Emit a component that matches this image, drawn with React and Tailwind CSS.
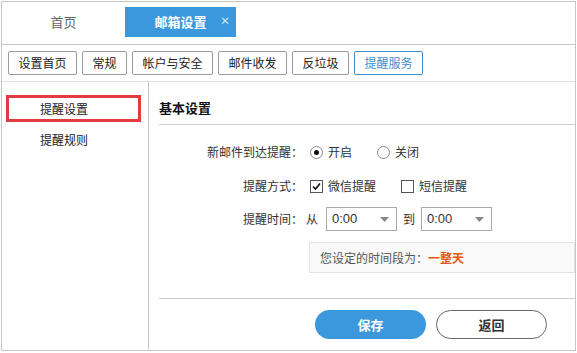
import { useState } from 'react';

const FONT = { fontFamily: '"Noto Sans CJK SC", "Liberation Sans", sans-serif' };

const TOP_BUTTONS = [
  { label: '设置首页', w: 'w-[69px]' },
  { label: '常规', w: 'w-[45px]' },
  { label: '帐户与安全', w: 'w-[81px]' },
  { label: '邮件收发', w: 'w-[69px]' },
  { label: '反垃圾', w: 'w-[57px]' },
  { label: '提醒服务', w: 'w-[69px]', active: true },
];

function Radio({ checked, label, onClick }) {
  return (
    <label className="flex items-center cursor-pointer" onClick={onClick}>
      <span className="w-[13px] h-[13px] rounded-full border border-[#8a8a8a] bg-white flex items-center justify-center">
        {checked && <span className="w-[5px] h-[5px] rounded-full bg-[#111]" />}
      </span>
      <span className="ml-[5px]">{label}</span>
    </label>
  );
}

function Check({ checked, label, onClick }) {
  return (
    <label className="flex items-center cursor-pointer" onClick={onClick}>
      <span className="w-[13px] h-[13px] border border-[#555] bg-white flex items-center justify-center">
        {checked && (
          <svg width="9" height="9" viewBox="0 0 9 9">
            <path d="M1 4.5 L3.5 7 L8 1.5" fill="none" stroke="#111" strokeWidth="1.6" />
          </svg>
        )}
      </span>
      <span className="ml-[5px]">{label}</span>
    </label>
  );
}

function TimeSelect({ value }) {
  return (
    <div className="w-[71px] h-[24px] border border-[#a9a9a9] bg-white flex items-center justify-between pl-[5px] pr-[7px]">
      <span className="text-[13px]" style={{ fontFamily: '"Liberation Sans", Arial, sans-serif' }}>{value}</span>
      <svg width="9" height="5" viewBox="0 0 9 5">
        <path d="M0 0 L9 0 L4.5 5 Z" fill="#888" />
      </svg>
    </div>
  );
}

export default function App() {
  const [notify, setNotify] = useState(true);
  const [wechat, setWechat] = useState(true);
  const [sms, setSms] = useState(false);

  return (
    <div className="w-[577px] h-[353px] bg-white text-[12px] text-[#333]" style={FONT}>
      <div className="m-px w-[575px] h-[350px] border border-[#c6c6c6] flex flex-col">
        {/* tabs */}
        <div className="h-[43px] border-b border-[#c6c6c6] flex items-start pt-[5px] shrink-0">
          <div className="w-[123px] h-[30px] flex items-center justify-center text-[13px] text-[#666]">首页</div>
          <div className="w-[111px] h-[30px] bg-[#3c98dc] text-white relative flex items-center justify-center">
            <span className="text-[13px] font-bold">邮箱设置</span>
            <span className="absolute right-[6px] top-[8px] text-[10px] leading-[12px] text-[#d5e7f7] font-bold">×</span>
          </div>
        </div>

        {/* sub nav */}
        <div className="h-[37px] border-b border-[#e2e2e2] flex items-start pt-[6px] pl-[6px] gap-[5px] shrink-0">
          {TOP_BUTTONS.map((b) => (
            <button
              key={b.label}
              className={`${b.w} h-[24px] rounded-[2px] border flex items-center justify-center text-[12px] ${
                b.active ? 'border-[#3f8fcf] text-[#3f8fcf]' : 'border-[#9b9b9b] text-[#222]'
              }`}
            >
              {b.label}
            </button>
          ))}
        </div>

        <div className="flex flex-1 min-h-0">
          {/* sidebar */}
          <div className="w-[147px] border-r border-[#c6c6c6] pt-[13px] pl-[4px] shrink-0 mb-[1px]">
            <div className="w-[135px] h-[27px] border-[3px] border-[#e23b40] flex items-center pl-[31px] text-[12px] text-[#222]">
              提醒设置
            </div>
            <div className="w-[135px] h-[27px] mt-[4px] flex items-center pl-[34px] text-[12px] text-[#222]">
              提醒规则
            </div>
          </div>

          {/* content */}
          <div className="flex-1 pl-[10px] flex flex-col">
            <div className="h-[43px] border-b border-[#cfcfcf] pt-[17px] shrink-0">
              <div className="text-[13px] font-bold leading-[18px] text-[#111]">基本设置</div>
            </div>

            <div className="flex items-center h-[24px] mt-[15px]">
              <div className="w-[144px] text-right">新邮件到达提醒：</div>
              <div className="ml-[7px] flex items-center gap-[25px]">
                <Radio checked={notify} label="开启" onClick={() => setNotify(true)} />
                <Radio checked={!notify} label="关闭" onClick={() => setNotify(false)} />
              </div>
            </div>

            <div className="flex items-center h-[24px] mt-[10px]">
              <div className="w-[144px] text-right">提醒方式：</div>
              <div className="ml-[7px] flex items-center gap-[25px]">
                <Check checked={wechat} label="微信提醒" onClick={() => setWechat(!wechat)} />
                <Check checked={sms} label="短信提醒" onClick={() => setSms(!sms)} />
              </div>
            </div>

            <div className="flex items-center h-[24px] mt-[9px]">
              <div className="w-[144px] text-right">提醒时间：</div>
              <div className="ml-[3px] flex items-center">
                <span className="mr-[8px]">从</span>
                <TimeSelect value="0:00" />
                <span className="mx-[6px]">到</span>
                <TimeSelect value="0:00" />
              </div>
            </div>

            <div className="ml-[150px] mt-[11px] h-[31px] border border-[#e3e3e3] bg-[#f9f9f9] flex items-center pl-[10px] text-[#555]">
              您设定的时间段为：<span className="text-[#e8570f] font-bold">一整天</span>
            </div>

            <div className="mt-[25px] border-t border-[#cfcfcf] pt-[11px] pl-[156px] flex gap-[10px]">
              <button className="w-[111px] h-[29px] rounded-full bg-[#3c98dc] text-white text-[13px] font-bold">保存</button>
              <button className="w-[111px] h-[29px] rounded-full border border-[#666] bg-white text-[#333] text-[13px] font-bold">返回</button>
            </div>
          </div>
        </div>
      </div>
    </div>
  );
}
